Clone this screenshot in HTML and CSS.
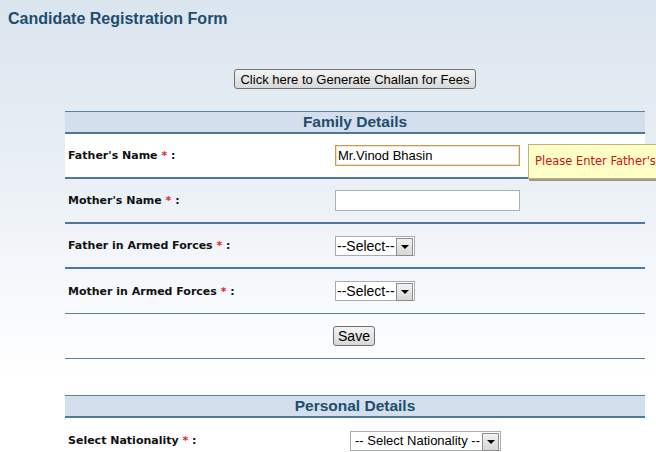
FILE: index.html
```html
<!DOCTYPE html>
<html lang="en">
<head>
  <meta charset="UTF-8" />
  <title>Candidate Registration Form</title>
  <link rel="stylesheet" href="styles.css">
</head>
<body>

  <h1 class="page-title">Candidate Registration Form</h1>

  <div class="form-wrap">
    <div class="challan">
      <button type="button" class="btn">Click here to Generate Challan for Fees</button>
    </div>

    <div class="section">
      <div class="section-head">Family Details</div>

      <div class="row row-active thick">
        <label class="lbl">Father's Name <span class="req">*</span> :</label>
        <div class="ctl">
          <input type="text" class="txt txt-focus" value="Mr.Vinod Bhasin">
          <div class="tip">Please Enter Father's Name</div>
        </div>
      </div>

      <div class="row thick">
        <label class="lbl">Mother's Name <span class="req">*</span> :</label>
        <div class="ctl"><input type="text" class="txt"></div>
      </div>

      <div class="row thick">
        <label class="lbl">Father in Armed Forces <span class="req">*</span> :</label>
        <div class="ctl">
          <span class="sel"><select><option>--Select--</option></select></span>
        </div>
      </div>

      <div class="row">
        <label class="lbl">Mother in Armed Forces <span class="req">*</span> :</label>
        <div class="ctl">
          <span class="sel"><select><option>--Select--</option></select></span>
        </div>
      </div>

      <div class="row row-save">
        <div class="lbl"></div>
        <div class="ctl"><button type="button" class="btn btn-save">Save</button></div>
      </div>
    </div>

    <div class="section section-personal">
      <div class="section-head">Personal Details</div>

      <div class="row row-nat">
        <label class="lbl">Select Nationality <span class="req">*</span> :</label>
        <div class="ctl">
          <span class="sel sel-wide"><select><option>-- Select Nationality --</option></select></span>
        </div>
      </div>
    </div>
  </div>

</body>
</html>
```

FILE: styles.css
```css
* { box-sizing: border-box; }
html, body {
  height: 100%;
}
body {
  margin: 0;
  padding: 0;
  font-family: 'Liberation Sans', Arial, sans-serif;
  background: linear-gradient(#dbe5ef 0, #e6edf4 140px, #f3f6fa 260px, #ffffff 380px);
  overflow: hidden;
}
.page-title {
  margin: 0;
  padding: 10px 0 0 8px;
  font-size: 16px;
  font-weight: bold;
  color: #1f4d6d;
  line-height: 18px;
}
.form-wrap {
  margin-left: 65px;
  width: 580px;
}
.challan {
  text-align: center;
  padding-top: 41px;
  height: 83px;
}
.btn {
  font-family: 'Liberation Sans', Arial, sans-serif;
  font-size: 13px;
  color: #000;
  height: 20px;
  padding: 0 6px;
  border: 1px solid #707070;
  border-radius: 3px;
  background: linear-gradient(#f4f4f4, #e6e6e6 50%, #d8d8d8);
  white-space: nowrap;
  cursor: pointer;
}
.challan .btn {
  width: 242px;
  padding: 0;
}

/* sections */
.section-head {
  height: 23px;
  border-top: 1px solid #5a7fa6;
  border-bottom: 2px solid #4f76a0;
  background: #d3dfed;
  text-align: center;
  font-size: 15.5px;
  font-weight: bold;
  color: #1f4d6d;
  line-height: 19px;
}
.section-personal {
  margin-top: 36px;
}
.row {
  display: grid;
  grid-template-columns: 270px 1fr;
  align-items: center;
  height: 45px;
  border-bottom: 1px solid #5a7fa6;
}
.row.thick {
  border-bottom: 2px solid #4f76a0;
}
.row-active {
  background: #fff;
}
.row-nat {
  grid-template-columns: 285px 1fr;
  border-bottom: none;
}
.lbl {
  padding-left: 3px;
  font-family: 'DejaVu Sans', Verdana, sans-serif;
  font-size: 11px;
  font-weight: bold;
  color: #111;
}
.req {
  color: #e8202a;
}
.ctl {
  position: relative;
  display: flex;
  align-items: center;
}

/* inputs */
.txt {
  width: 185px;
  height: 21px;
  border: 1px solid #a9b0b8;
  padding: 0 2px;
  font-family: 'Liberation Sans', Arial, sans-serif;
  font-size: 13px;
  color: #000;
  background: #fff;
  outline: none;
}
.txt-focus {
  border-color: #c29c5e;
  box-shadow: inset 0 0 0 1px #f3e2bf;
}

/* error tooltip */
.tip {
  position: absolute;
  left: 193px;
  top: -1px;
  width: 200px;
  height: 35px;
  padding: 9px 0 0 6px;
  line-height: 15px;
  background: #ffffc6;
  border: 1px solid #c7b26a;
  box-shadow: 1px 2px 0 #9a9a9a;
  font-family: 'DejaVu Sans', Verdana, sans-serif;
  font-size: 11.5px;
  color: #d0121b;
  white-space: nowrap;
  overflow: hidden;
}
.tip::before,
.tip::after {
  content: "";
  position: absolute;
  top: 8px;
  border-style: solid;
  border-color: transparent;
}
.tip::before {
  left: -9px;
  border-width: 8px 9px 8px 0;
  border-right-color: #c7b26a;
}
.tip::after {
  left: -8px;
  border-width: 8px 9px 8px 0;
  border-right-color: #ffffc6;
}

/* selects */
.sel {
  position: relative;
  display: inline-block;
  width: 80px;
  height: 20px;
}
.sel-wide {
  width: 151px;
}
.sel select {
  -webkit-appearance: none;
  appearance: none;
  width: 100%;
  height: 100%;
  border: 1px solid #a5acb5;
  border-radius: 0;
  background: #fff;
  padding: 0 0 0 1px;
  font-family: 'Liberation Sans', Arial, sans-serif;
  font-size: 14px;
  color: #000;
  outline: none;
}
.sel-wide select {
  font-size: 13px;
  padding-left: 4px;
}
.sel::before {
  content: "";
  position: absolute;
  right: 2px;
  top: 2px;
  width: 15px;
  height: 16px;
  border: 1px solid #8d8d8d;
  background: linear-gradient(#f2f2f2, #d6d6d6);
  pointer-events: none;
}
.sel::after {
  content: "";
  position: absolute;
  right: 6px;
  top: 9px;
  border-style: solid;
  border-width: 4px 4px 0 4px;
  border-color: #000 transparent transparent transparent;
  pointer-events: none;
}
.btn-save {
  width: 42px;
  margin-left: -2px;
  padding: 0;
  font-size: 14px;
}
```
